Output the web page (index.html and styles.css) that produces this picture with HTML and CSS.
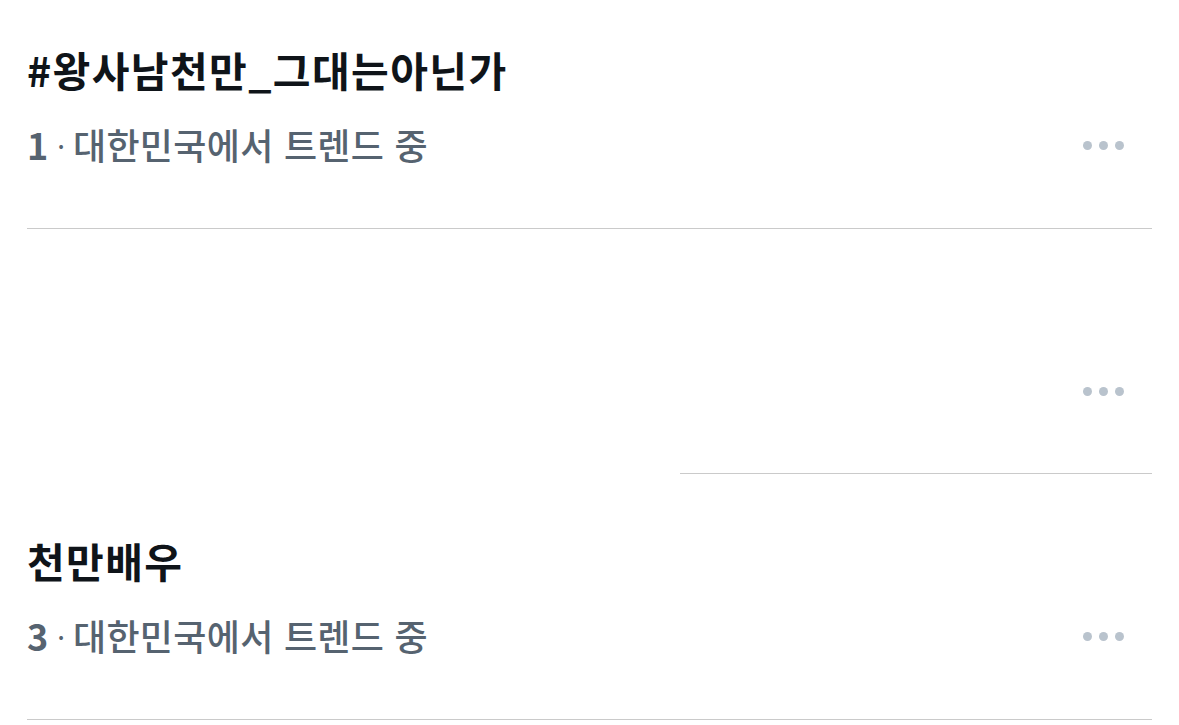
FILE: index.html
```html
<!DOCTYPE html>
<html lang="ko">
<head>
<meta charset="utf-8">
<link rel="stylesheet" href="styles.css">
</head>
<body>
<div class="list">
  <div class="item">
    <div class="text">
      <div class="title">#왕사남천만_그대는아닌가</div>
      <div class="meta"><span class="rank">1</span><span class="sep">·</span>대한민국에서 트렌드 중</div>
    </div>
    <div class="more"><span class="dot"></span><span class="dot"></span><span class="dot"></span></div>
  </div>
  <div class="item item-empty">
    <div class="text"></div>
    <div class="more"><span class="dot"></span><span class="dot"></span><span class="dot"></span></div>
  </div>
  <div class="item">
    <div class="text">
      <div class="title">천만배우</div>
      <div class="meta"><span class="rank">3</span><span class="sep">·</span>대한민국에서 트렌드 중</div>
    </div>
    <div class="more"><span class="dot"></span><span class="dot"></span><span class="dot"></span></div>
  </div>
</div>
</body>
</html>
```
FILE: styles.css
```css
html, body {
  margin: 0;
  padding: 0;
  background: #ffffff;
  overflow: hidden;
}
body {
  font-family: "Noto Sans CJK KR", "Noto Sans", sans-serif;
}
.list {
  margin-top: -17px;
  padding: 0 27px;
}
.item {
  position: relative;
  height: 245px;
  display: flex;
  align-items: center;
  justify-content: space-between;
  border-bottom: 1px solid #cacaca;
}
.item-empty {
  border-bottom: none;
}
.item-empty::after {
  content: "";
  position: absolute;
  left: 653px;
  right: 0;
  bottom: 0;
  height: 1px;
  background: #cacaca;
}
.text {
  display: flex;
  flex-direction: column;
}
.title {
  font-size: 41px;
  font-weight: 700;
  color: #0f1419;
  line-height: 56px;
  letter-spacing: 1.4px;
}
.meta {
  margin-top: 22px;
  font-size: 36px;
  font-weight: 500;
  color: #566370;
  line-height: 50px;
  letter-spacing: 0.3px;
}
.rank {
  font-weight: 700;
}
.sep {
  margin: 0 8px 0 9px;
  font-size: 24px;
  vertical-align: 4px;
}
.more {
  display: flex;
  gap: 7px;
  margin-right: 28px;
  margin-top: 80px;
}
.dot {
  width: 9px;
  height: 9px;
  border-radius: 50%;
  background: #b9c3cd;
}
```
